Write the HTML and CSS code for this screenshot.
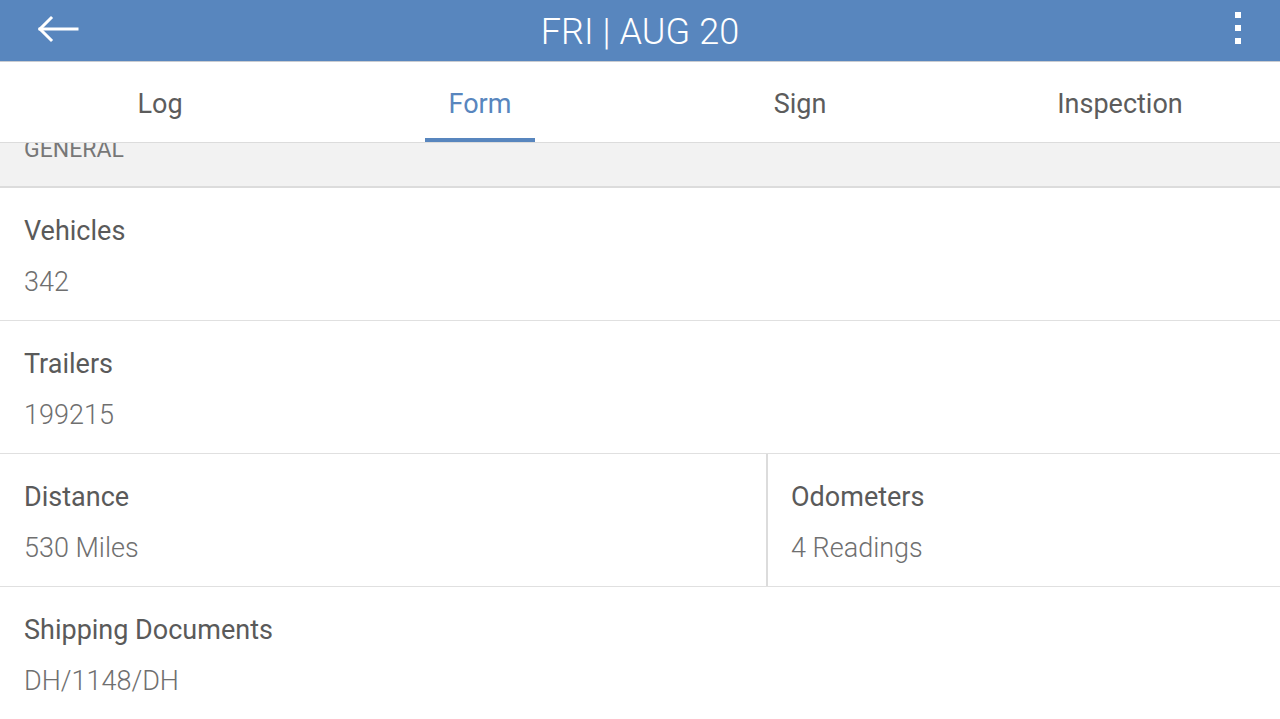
FILE: index.html
```html
<!DOCTYPE html>
<html lang="en">
<head>
    <meta charset="UTF-8">
    <meta name="viewport" content="width=device-width, initial-scale=1.0">
    <title>FRI | AUG 20</title>
    <link rel="stylesheet" href="styles.css">
</head>
<body>
    <!-- Top app bar -->
    <header class="appbar">
        <button class="icon-btn back-btn" aria-label="Back">
            <svg width="44" height="28" viewBox="0 0 44 28" fill="none" stroke="#fff" stroke-width="3" stroke-linecap="square">
                <path d="M4 14 H41"/>
                <path d="M15 3 L4 14 L15 25"/>
            </svg>
        </button>
        <h1 class="appbar-title">FRI | AUG 20</h1>
        <button class="icon-btn menu-btn" aria-label="More">
            <span class="dot"></span>
            <span class="dot"></span>
            <span class="dot"></span>
        </button>
    </header>

    <!-- Tabs -->
    <nav class="tabs">
        <a class="tab">Log</a>
        <a class="tab active">Form</a>
        <a class="tab">Sign</a>
        <a class="tab">Inspection</a>
    </nav>

    <!-- Form content (scrolled slightly) -->
    <main class="content">
        <div class="form-list">
            <div class="section-header">General</div>

            <div class="row">
                <div class="field">
                    <div class="field-label">Vehicles</div>
                    <div class="field-value">342</div>
                </div>
            </div>

            <div class="row">
                <div class="field">
                    <div class="field-label">Trailers</div>
                    <div class="field-value">199215</div>
                </div>
            </div>

            <div class="row row-split">
                <div class="field">
                    <div class="field-label">Distance</div>
                    <div class="field-value">530 Miles</div>
                </div>
                <div class="field field-side">
                    <div class="field-label">Odometers</div>
                    <div class="field-value">4 Readings</div>
                </div>
            </div>

            <div class="row">
                <div class="field">
                    <div class="field-label">Shipping Documents</div>
                    <div class="field-value">DH/1148/DH</div>
                </div>
            </div>
        </div>
    </main>
</body>
</html>
```

FILE: styles.css
```css
* {
    box-sizing: border-box;
}
html, body {
    height: 100%;
}
body {
    margin: 0;
    font-family: 'Roboto', 'Noto Sans', sans-serif;
    background-color: #fff;
    color: #555;
    display: flex;
    flex-direction: column;
    overflow: hidden;
}

/* App bar */
.appbar {
    height: 62px;
    flex: none;
    background-color: #5886be;
    border-bottom: 1px solid #c9ccd1;
    display: grid;
    grid-template-columns: 1fr auto 1fr;
    align-items: center;
    padding: 0 30px 0 36px;
}
.icon-btn {
    background: none;
    border: none;
    padding: 0;
    cursor: pointer;
}
.back-btn {
    display: flex;
    align-items: center;
    justify-self: start;
    margin-top: -4px;
}
.appbar-title {
    margin: 2px 0 0 0;
    position: relative;
    left: -3px;
    font-size: 36px;
    font-weight: 300;
    color: #fff;
    letter-spacing: 0.1px;
}
.menu-btn {
    display: flex;
    flex-direction: column;
    gap: 7px;
    width: 24px;
    align-items: center;
    justify-self: end;
    margin-top: -6px;
}
.dot {
    width: 6px;
    height: 6px;
    background-color: #fff;
}

/* Tabs */
.tabs {
    height: 81px;
    flex: none;
    display: grid;
    grid-template-columns: repeat(4, 1fr);
    border-bottom: 1px solid #dcdcdc;
    background-color: #fff;
}
.tab {
    display: flex;
    align-items: center;
    justify-content: center;
    font-size: 27px;
    color: #5c5c5c;
    padding-top: 4px;
    position: relative;
}
.tab.active {
    color: #5886be;
}
.tab.active::after {
    content: '';
    position: absolute;
    left: 50%;
    bottom: 0;
    width: 110px;
    margin-left: -55px;
    height: 4px;
    background-color: #5886be;
}

/* Content */
.content {
    flex: 1;
    overflow: hidden;
}
.form-list {
    margin-top: -20px; /* list is scrolled a little */
}
.section-header {
    height: 65px;
    padding: 14px 24px 0;
    line-height: 26px;
    font-size: 23px;
    color: #777;
    text-transform: uppercase;
    background-color: #f2f2f2;
    border-bottom: 2px solid #dcdcdc;
}
.row {
    display: grid;
    grid-template-columns: 1fr;
    border-bottom: 1px solid #e0e0e0;
}
.row-split {
    grid-template-columns: 766px 1fr;
}
.field {
    height: 132px;
    padding: 26px 24px 0;
}
.field-side {
    border-left: 2px solid #dcdcdc;
    padding-left: 23px;
}
.field-label {
    font-size: 27px;
    line-height: 34px;
    color: #5a5a5a;
}
.field-value {
    margin-top: 17px;
    font-size: 27px;
    line-height: 34px;
    font-weight: 300;
    color: #6f6f6f;
}
```
